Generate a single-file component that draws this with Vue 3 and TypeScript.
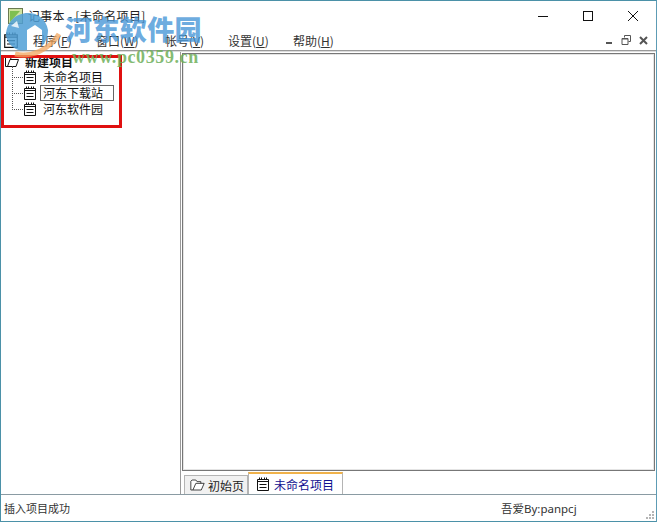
<script setup lang="ts">
const menus = [
  { label: '程序(', key: 'F', w: 'm1' },
  { label: '窗口(', key: 'W', w: 'm2' },
  { label: '帐号(', key: 'V', w: 'm3' },
  { label: '设置(', key: 'U', w: 'm4' },
  { label: '帮助(', key: 'H', w: 'm5' },
]
const items = [
  { label: '未命名项目', selected: false },
  { label: '河东下载站', selected: true },
  { label: '河东软件园', selected: false },
]
</script>

<template>
  <div class="window">
    <header class="titlebar">
      <svg class="appicon" width="16" height="16" viewBox="0 0 16 16">
        <rect x="0.5" y="0.5" width="14" height="15" fill="#cfe3a0" stroke="#6a7a50" />
        <path d="M2 14 L2 3 L12 3 Z" fill="#7fbf50" />
      </svg>
      <span class="title">记事本 - [未命名项目]</span>
      <div class="caption">
        <svg width="14" height="14" viewBox="0 0 14 14"><path d="M2 7.5H12" stroke="#111" /></svg>
        <svg width="14" height="14" viewBox="0 0 14 14"><rect x="2.5" y="2.5" width="9" height="9" fill="none" stroke="#111" /></svg>
        <svg width="14" height="14" viewBox="0 0 14 14"><path d="M2 2L12 12M12 2L2 12" stroke="#111" /></svg>
      </div>
    </header>

    <nav class="menubar">
      <svg class="menuicon" width="16" height="16" viewBox="0 0 14 14">
        <path d="M1.5 2.5H12.5V13.5H1.5ZM1.5 4.5H12.5M3.5 7.5H10.5M3.5 10.5H10.5M3.5 0.5V3M5.5 0.5V3M8.5 0.5V3M10.5 0.5V3" fill="none" stroke="#111" />
      </svg>
      <span v-for="m in menus" :key="m.key" class="menu" :class="m.w">{{ m.label }}<u>{{ m.key }}</u>)</span>
      <div class="mdi">
        <svg width="11" height="11" viewBox="0 0 11 11"><rect x="2" y="7" width="6" height="2" fill="#555" /></svg>
        <svg width="11" height="11" viewBox="0 0 11 11"><path d="M3.5 2.5V0.5H9.5V6.5H7.5M1 3.5H7V9.5H1ZM1 4H7" fill="none" stroke="#555" /></svg>
        <svg width="11" height="11" viewBox="0 0 11 11"><path d="M2 2L9 9M9 2L2 9" stroke="#555" stroke-width="2" /></svg>
      </div>
    </nav>
    <div class="menurule"></div>

    <main class="body">
      <aside class="tree">
        <div class="node root">
          <svg width="14" height="11" viewBox="0 0 14 11">
            <path d="M2.5 10.5L5 3.5H13.5L11 10.5H0.5V1.5L1.5 0.5H5L6 3" fill="#fff" stroke="#111" />
          </svg>
          <b>新建项目</b>
        </div>
        <div v-for="it in items" :key="it.label" class="node child">
          <span class="dots"></span>
          <svg width="14" height="14" viewBox="0 0 14 14">
            <path d="M1.5 2.5H12.5V13.5H1.5ZM1.5 4.5H12.5M3.5 7.5H10.5M3.5 10.5H10.5M3.5 0.5V3M5.5 0.5V3M8.5 0.5V3M10.5 0.5V3" fill="#fff" stroke="#111" />
          </svg>
          <span class="label" :class="{ sel: it.selected }">{{ it.label }}</span>
        </div>
        <div class="vline"></div>
      </aside>
      <section class="content">
        <div class="editor"></div>
        <div class="tabs">
          <div class="tab inactive">
            <svg width="15" height="14" viewBox="0 0 18 14">
              <path d="M3.5 13L7 5H17L13.5 13H1V2.5L2.5 1H7L8.5 3H13V5" fill="#fff" stroke="#222" />
            </svg>
            <span>初始页</span>
          </div>
          <div class="tab active">
            <svg width="14" height="14" viewBox="0 0 14 14">
              <path d="M1.5 2.5H12.5V13.5H1.5ZM1.5 4.5H12.5M3.5 7.5H10.5M3.5 10.5H10.5M3.5 0.5V3M5.5 0.5V3M8.5 0.5V3M10.5 0.5V3" fill="#fff" stroke="#111" />
            </svg>
            <span>未命名项目</span>
          </div>
        </div>
      </section>
    </main>

    <footer class="status">
      <span class="msg">插入项目成功</span>
      <span class="who">吾爱By:panpcj</span>
      <svg class="grip" width="10" height="10" viewBox="0 0 10 10" fill="#b5b5b5">
        <rect x="7" y="1" width="2" height="2" /><rect x="4" y="4" width="2" height="2" /><rect x="7" y="4" width="2" height="2" />
        <rect x="1" y="7" width="2" height="2" /><rect x="4" y="7" width="2" height="2" /><rect x="7" y="7" width="2" height="2" />
      </svg>
    </footer>

    <div class="redbox"></div>
    <svg class="wm-logo" width="64" height="56" viewBox="0 0 64 56">
      <path d="M5 30C5 16 15 7 27 7C37 7 45 13 47 24C47 30 45 36 41 40L41 24L34 19L26 24L26 44C18 46 8 42 5 30Z" fill="#4f9fd6" opacity="0.85" />
      <path d="M10 20L16 15L18 22Z" fill="#fff" opacity="0.8" />
      <path d="M14 48C30 52 48 44 58 28" fill="none" stroke="#f2a55e" stroke-width="5" opacity="0.75" />
    </svg>
    <div class="wm-name">河东软件园</div>
    <div class="wm-url">www.pc0359.cn</div>
  </div>
</template>

<style>
html, body { margin: 0; background: #fff; }
</style>

<style scoped>
.window {
  position: relative;
  box-sizing: border-box;
  width: 657px;
  height: 522px;
  border: 1px solid #4b91a8;
  border-right-color: #5d9cb5;
  background: #fff;
  display: flex;
  flex-direction: column;
  overflow: hidden;
  font-family: "Noto Sans CJK SC", "Liberation Sans", sans-serif;
  font-size: 12px;
  color: #111;
}
.titlebar {
  height: 29px;
  display: flex;
  align-items: center;
  padding-left: 7px;
  flex: none;
}
.appicon { margin-right: 4px; }
.title { font-size: 12px; color: #222; letter-spacing: 0.3px; }
.caption {
  margin-left: auto;
  display: flex;
  gap: 31px;
  padding-right: 16px;
}
.menubar {
  height: 20px;
  display: flex;
  align-items: center;
  flex: none;
  position: relative;
}
.menuicon { margin-left: 2px; margin-right: 14px; }
.menu { color: #333; font-size: 12px; font-family: "Noto Sans CJK SC", sans-serif; }
.m1 { width: 63px; }
.m2 { width: 69px; }
.m3 { width: 63px; }
.m4 { width: 65px; }
.m5 { width: 60px; }
.mdi {
  margin-left: auto;
  display: flex;
  gap: 6px;
  padding-right: 7px;
}
.menurule {
  height: 1px;
  flex: none;
  background: #9a9a9a;
  border-bottom: 1px solid #dcdcdc;
}
.body {
  flex: 1;
  display: flex;
  min-height: 0;
}
.tree {
  width: 179px;
  flex: none;
  position: relative;
  padding-top: 1px;
  border-right: 1px solid #9a9a9a;
  box-sizing: content-box;
}
.node {
  height: 16px;
  display: flex;
  align-items: center;
  font-size: 12px;
  color: #111;
}
.root { padding-left: 4px; gap: 6px; }
.root b { font-weight: 700; }
.child { padding-left: 11px; }
.dots {
  width: 11px;
  border-top: 1px dotted #555;
  flex: none;
}
.child .label {
  margin-left: 3px;
  padding: 0 1px 0 2px;
  border: 1px solid transparent;
  line-height: 14px;
  width: 69px;
}
.child .label.sel { border-color: #666; }
.vline {
  position: absolute;
  left: 11px;
  top: 14px;
  height: 42px;
  border-left: 1px dotted #555;
}
.content {
  flex: 1;
  min-width: 0;
  display: flex;
  flex-direction: column;
  margin-left: 1px;
}
.editor {
  height: 418px;
  box-sizing: border-box;
  margin-top: 1px;
  margin-right: 1px;
  border: 1px solid #777;
  box-shadow: inset 0 0 0 1px #e4e4e4;
  background: #fff;
  flex: none;
}
.tabs {
  display: flex;
  align-items: flex-end;
  height: 23px;
  flex: none;
  padding-left: 2px;
  box-sizing: border-box;
}
.tab {
  display: flex;
  align-items: center;
  box-sizing: border-box;
  font-size: 12px;
}
.inactive {
  height: 19px;
  width: 64px;
  padding-left: 5px;
  gap: 3px;
  background: #f1f1f1;
  border: 1px solid #b4b4b4;
  border-bottom: 0;
  color: #222;
}
.active {
  height: 22px;
  width: 95px;
  padding-left: 7px;
  gap: 4px;
  background: #fff;
  border-top: 2px solid #f0b24a;
  border-right: 1px solid #b4b4b4;
  border-left: 1px solid #b4b4b4;
  color: #101090;
}
.status {
  position: relative;
  height: 27px;
  flex: none;
  box-sizing: border-box;
  border-top: 1px solid #8a9ba3;
  display: flex;
  align-items: center;
  padding-left: 3px;
  font-size: 11px;
  color: #333;
}
.msg { font-size: 11px; }
.who {
  margin-left: auto;
  width: 155px;
  font-size: 11.5px;
  font-family: "Noto Sans", "Noto Sans CJK SC", sans-serif;
}
.grip { position: absolute; right: 1px; bottom: 1px; }
.redbox {
  position: absolute;
  left: 0;
  top: 54px;
  width: 121px;
  height: 73px;
  box-sizing: border-box;
  border: 3px solid #e01010;
  pointer-events: none;
}
.wm-logo { position: absolute; left: 0; top: 5px; }
.wm-name {
  position: absolute;
  left: 64px;
  top: 12px;
  font-size: 27px;
  line-height: 32px;
  font-weight: 900;
  letter-spacing: 0.4px;
  font-family: "Noto Sans CJK SC", sans-serif;
  color: rgba(70, 150, 215, 0.8);
}
.wm-url {
  position: absolute;
  left: 71px;
  top: 46px;
  font-size: 18px;
  line-height: 20px;
  font-weight: 700;
  letter-spacing: 0.6px;
  font-family: "Liberation Serif", serif;
  color: rgba(110, 175, 90, 0.85);
}
</style>
